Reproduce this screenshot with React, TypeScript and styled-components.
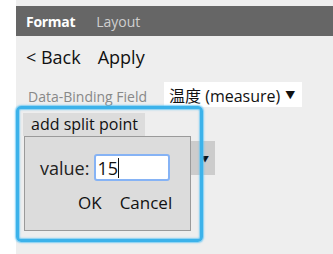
import React from 'react';
import styled, { createGlobalStyle } from 'styled-components';

const GlobalStyle = createGlobalStyle`
    html, body {
        margin: 0;
        padding: 0;
        background: #ffffff;
    }
    body {
        font-family: "Open Sans", "Noto Sans", "Noto Sans CJK SC", sans-serif;
        white-space: nowrap;
    }
`;

const Page = styled.div`
    width: 333px;
    height: 254px;
    padding-left: 16px;
    box-sizing: border-box;
    overflow: hidden;
`;

const Panel = styled.div`
    width: 317px;
    height: 254px;
    background: #eeeeee;
    padding-top: 6px;
    box-sizing: border-box;
`;

const TabBar = styled.div`
    height: 30px;
    background: #666666;
    display: flex;
    align-items: center;
    gap: 21px;
    padding-left: 10px;
    font-size: 14px;
`;

const Tab = styled.span<{ $active?: boolean }>`
    color: ${(p) => (p.$active ? '#ffffff' : '#cfcfcf')};
    font-weight: ${(p) => (p.$active ? 700 : 400)};
    letter-spacing: ${(p) => (p.$active ? '-0.3px' : '0')};
`;

const Toolbar = styled.div`
    height: 42px;
    display: flex;
    align-items: center;
    gap: 17px;
    padding-left: 10px;
    font-size: 18px;
    color: #111111;
`;

const FieldRow = styled.div`
    display: flex;
    align-items: center;
    margin-top: 4px;
    padding-left: 12px;
    height: 25px;
`;

const FieldLabel = styled.span`
    width: 136px;
    font-size: 14px;
    color: #888888;
    padding-top: 4px;
`;

const FieldSelect = styled.div`
    height: 25px;
    width: 138px;
    background: #ffffff;
    display: flex;
    align-items: center;
    padding-left: 5px;
    box-sizing: border-box;
    font-size: 16px;
    color: #111111;
    gap: 5px;
`;

const Caret = styled.span`
    font-size: 10px;
`;

const EditorArea = styled.div`
    position: relative;
    margin-top: -1px;
    padding-top: 35px;
`;

const SplitSelect = styled.div`
    margin-left: 140px;
    width: 59px;
    height: 34px;
    background: #cccccc;
    display: flex;
    align-items: center;
    justify-content: flex-end;
    padding-right: 6px;
    box-sizing: border-box;
    font-size: 8px;
    color: #111111;
`;

const PopupFrame = styled.div`
    position: absolute;
    top: 0;
    left: 0;
    width: 187px;
    height: 136px;
    box-sizing: border-box;
    border: 3px solid #3cb2ea;
    border-radius: 5px;
    box-shadow: 0 0 1.5px 1px rgba(90, 195, 245, 0.75), inset 0 0 1.5px 1px rgba(90, 195, 245, 0.75);
    padding: 4px 0 0 4px;
`;

const PopupTab = styled.div`
    display: inline-block;
    height: 23px;
    line-height: 23px;
    width: 122px;
    box-sizing: border-box;
    padding-left: 8px;
    background: #dcdcdc;
    font-size: 16px;
    color: #111111;
`;

const Dialog = styled.div`
    margin-left: 1px;
    width: 167px;
    height: 95px;
    box-sizing: border-box;
    background: #dcdcdc;
    border: 1px solid #9a9a9a;
    display: flex;
    flex-direction: column;
    padding-top: 17px;
`;

const ValueRow = styled.div`
    display: flex;
    align-items: center;
    padding-left: 15px;
    gap: 5px;
    font-size: 18px;
    color: #222222;
`;

const ValueField = styled.div`
    width: 76px;
    height: 27px;
    box-sizing: border-box;
    background: #ffffff;
    border: 2px solid #86b3f5;
    border-radius: 3px;
    display: flex;
    align-items: center;
    padding-left: 1px;
    font-size: 18px;
    color: #111111;
`;

const TextCursor = styled.span`
    display: inline-block;
    width: 1px;
    height: 20px;
    background: #111111;
`;

const ButtonRow = styled.div`
    display: flex;
    gap: 18px;
    margin-top: 10px;
    padding-left: 53px;
    font-size: 17px;
    color: #111111;
`;

export default function App() {
    return (
        <>
            <GlobalStyle />
            <Page>
                <Panel>
                    <TabBar>
                        <Tab $active>Format</Tab>
                        <Tab>Layout</Tab>
                    </TabBar>
                    <Toolbar>
                        <span>&lt; Back</span>
                        <span>Apply</span>
                    </Toolbar>
                    <FieldRow>
                        <FieldLabel>Data-Binding Field</FieldLabel>
                        <FieldSelect>
                            <span>温度 (measure)</span>
                            <Caret>▼</Caret>
                        </FieldSelect>
                    </FieldRow>
                    <EditorArea>
                        <SplitSelect>▼</SplitSelect>
                        <PopupFrame>
                            <PopupTab>add split point</PopupTab>
                            <Dialog>
                                <ValueRow>
                                    <span>value:</span>
                                    <ValueField>
                                        15
                                        <TextCursor />
                                    </ValueField>
                                </ValueRow>
                                <ButtonRow>
                                    <span>OK</span>
                                    <span>Cancel</span>
                                </ButtonRow>
                            </Dialog>
                        </PopupFrame>
                    </EditorArea>
                </Panel>
            </Page>
        </>
    );
}
